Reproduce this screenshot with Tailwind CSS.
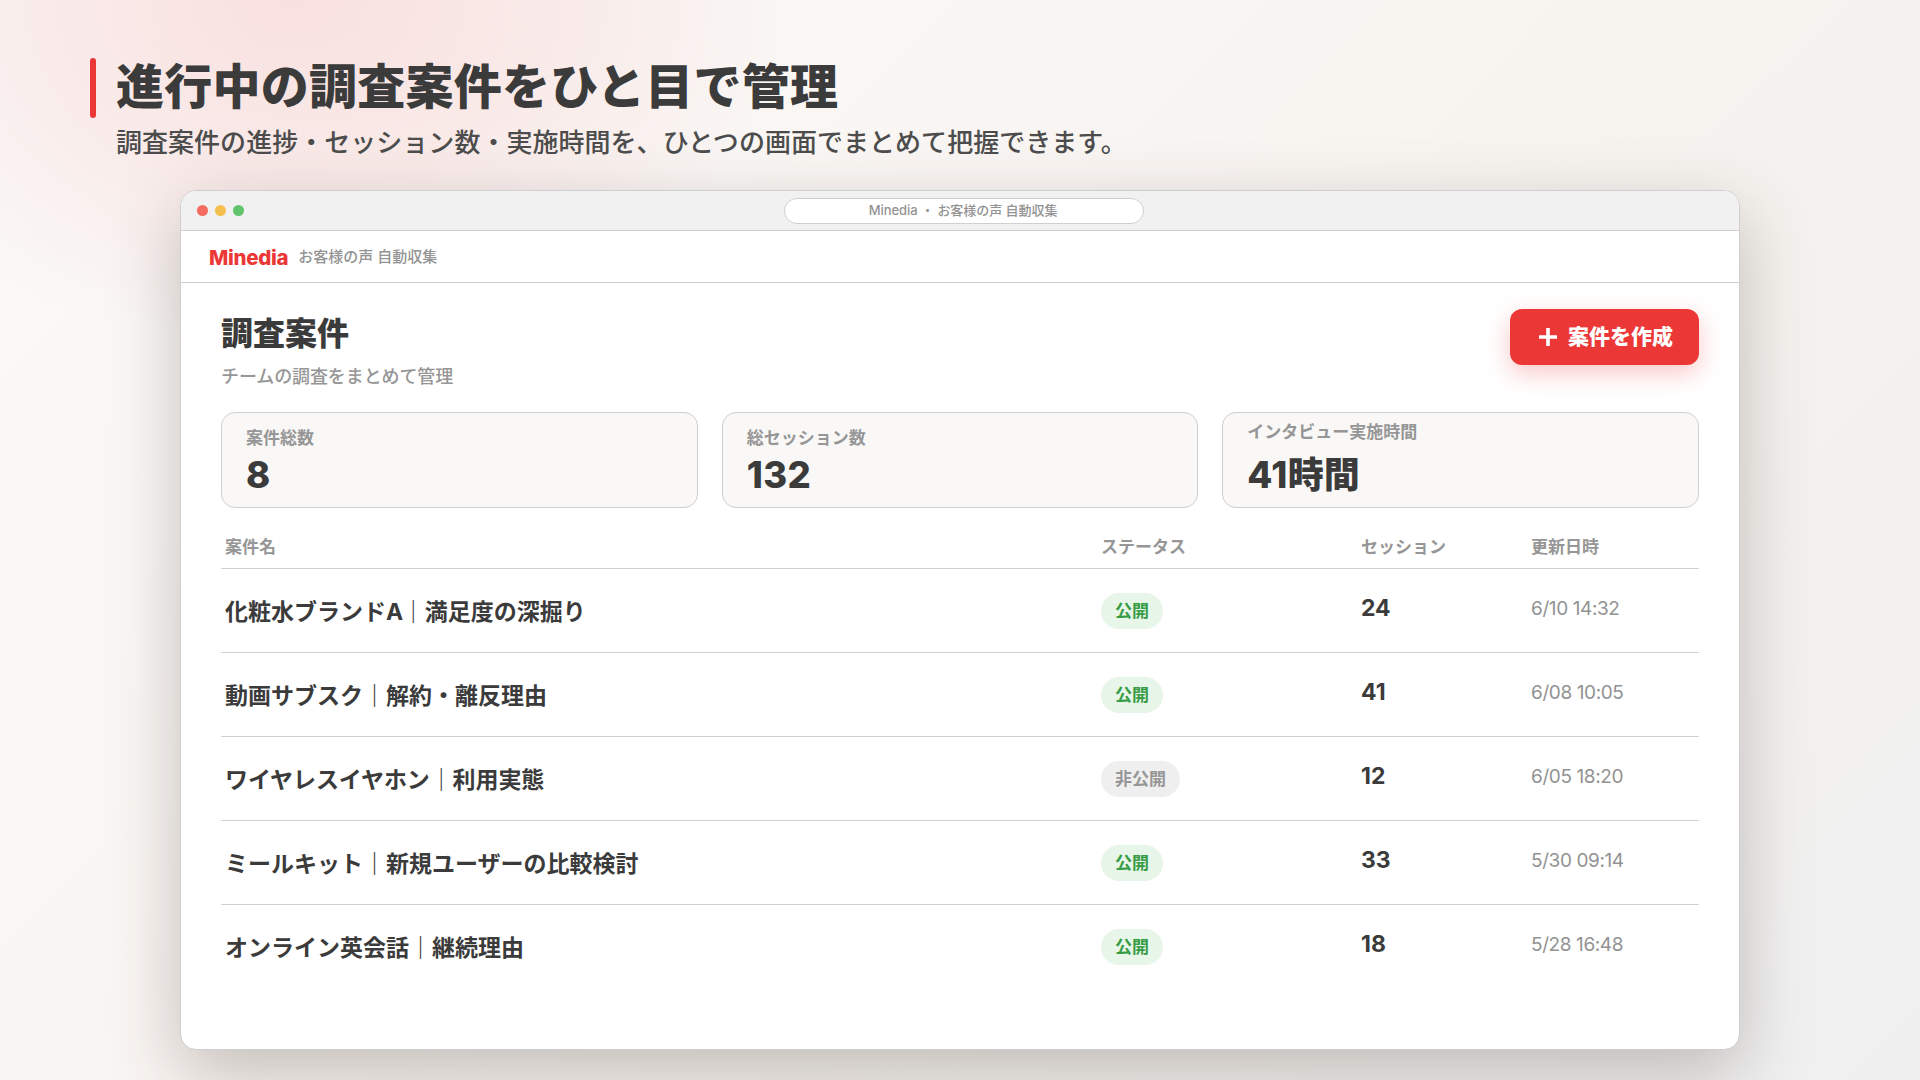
<!DOCTYPE html>
<html lang="ja">
<head>
    <meta charset="UTF-8">
    <meta name="viewport" content="width=device-width, initial-scale=1.0">
    <title>Minedia - お客様の声 自動収集</title>
    <!-- Include Tailwind CSS -->
    <script src="https://cdn.jsdelivr.net/npm/@tailwindcss/browser@4"></script>
</head>
<body class="w-[1920px] h-[1080px] overflow-hidden font-['Inter','Noto_Sans_CJK_JP',sans-serif] text-[#3b3b3b] bg-[radial-gradient(ellipse_500px_350px_at_290px_0px,rgba(240,60,60,0.13),rgba(240,60,60,0.075)_50%,transparent),linear-gradient(135deg,#fafaf9_0%,#f9f5f2_40%,#f4f2ee_68%,#f0f0f1_100%)]">

    <!-- Slide heading -->
    <header class="flex h-[190px] pl-[90px] pt-[58px]">
        <div class="w-[6px] h-[60px] rounded-full bg-[#ec3737]"></div>
        <div class="ml-5">
            <h1 class="text-[48px] leading-[58px] font-black tracking-[0.25px]">進行中の調査案件をひと目で管理</h1>
            <p class="mt-[8px] text-[26px] leading-[38px] font-medium tracking-[0.03px] text-[#4c4c4c]">調査案件の進捗・セッション数・実施時間を、ひとつの画面でまとめて把握できます。</p>
        </div>
    </header>

    <!-- Browser window -->
    <div class="mx-auto w-[1560px] h-[860px] bg-white rounded-2xl border border-[#cfcfcf] overflow-hidden shadow-[0_24px_70px_rgba(60,45,40,0.28)]">
        <!-- Window chrome -->
        <div class="flex items-center h-10 pl-4 bg-[#f1f1f1] border-b border-[#cfcfcf]">
            <div class="flex gap-[7px]">
                <div class="size-[11px] rounded-full bg-[#f56b5f]"></div>
                <div class="size-[11px] rounded-full bg-[#f5bf4f]"></div>
                <div class="size-[11px] rounded-full bg-[#5fc46b]"></div>
            </div>
            <div class="ml-[540px] w-[360px] h-[26px] flex items-center justify-center pb-[2px] pr-[2px] rounded-full bg-white border border-[#cfcfcf] text-[13px] leading-[18px] font-medium tracking-[-0.05px] text-[#939393]">Minedia ・ お客様の声 自動収集</div>
        </div>

        <!-- App header -->
        <div class="flex items-center h-[52px] pl-7 gap-[10px] border-b border-[#cfcfcf]">
            <span class="mt-[2px] text-[20.5px] leading-6 font-extrabold tracking-[-0.3px] text-[#ec3737]">Minedia</span>
            <span class="text-[15px] leading-6 font-medium text-[#939393]">お客様の声 自動収集</span>
        </div>

        <main class="px-10 pt-[26px]">
            <!-- Page title + action -->
            <div class="flex justify-between h-[103px]">
                <div>
                    <h2 class="mt-[5px] text-[32px] leading-[40px] font-black">調査案件</h2>
                    <p class="mt-[11px] text-[18px] leading-6 tracking-[-0.1px] font-medium text-[#969696]">チームの調査をまとめて管理</p>
                </div>
                <button class="flex items-center w-[189px] h-14 pl-[29px] gap-[11px] rounded-xl bg-[#ec3737] text-white text-[21px] leading-6 font-black shadow-[0_8px_24px_rgba(236,55,55,0.28)]">
                    <svg class="size-[18px]" viewBox="0 0 18 18" fill="none" stroke="currentColor" stroke-width="3.6"><path d="M9 0v18M0 9h18"/></svg>
                    <span class="-mt-px">案件を作成</span>
                </button>
            </div>

            <!-- Summary cards -->
            <div class="grid grid-cols-3 gap-6">
                <div class="h-24 px-6 pt-[13px] rounded-[14px] border border-[#cfcfcf] bg-[#f9f8f6]">
                    <div class="text-[17px] leading-6 font-bold text-[#969696]">案件総数</div>
                    <div class="text-[36.5px] leading-[50px] font-extrabold">8</div>
                </div>
                <div class="h-24 px-6 pt-[13px] rounded-[14px] border border-[#cfcfcf] bg-[#f9f8f6]">
                    <div class="text-[17px] leading-6 font-bold text-[#969696]">総セッション数</div>
                    <div class="text-[36.5px] leading-[50px] font-extrabold tracking-[0.4px]">132</div>
                </div>
                <div class="h-24 px-6 pt-[7px] rounded-[14px] border border-[#cfcfcf] bg-[#f9f8f6]">
                    <div class="text-[17px] leading-6 font-bold text-[#969696]">インタビュー実施時間</div>
                    <div class="mt-[6px] text-[36px] leading-[50px] font-black"><span class="text-[36.5px] font-extrabold tracking-[0.4px]">41</span>時間</div>
                </div>
            </div>

            <!-- Project table -->
            <div class="grid grid-cols-[876px_260px_170px_1fr] items-center h-[61px] pl-1 pt-[18px] border-b border-[#cfcfcf] text-[17px] leading-6 font-bold text-[#969696]">
                <span>案件名</span><span>ステータス</span><span>セッション</span><span>更新日時</span>
            </div>
            <div class="grid grid-cols-[876px_260px_170px_1fr] h-[84px] pl-1 pt-6 border-b border-[#cfcfcf]">
                <span class="mt-[3px] text-[23px] leading-8 font-bold">化粧水ブランド<span class="tracking-[-1.5px]">A</span>｜満足度の深掘り</span>
                <span class="w-fit h-9 px-[14px] rounded-full bg-[#e8f6e9] text-[17px] leading-9 font-bold text-[#379c45]">公開</span>
                <span class="text-[23px] leading-[31px] font-bold tracking-[-0.2px]">24</span>
                <span class="text-[19px] leading-[31px] tracking-[-0.4px] text-[#929292]">6/10 14:32</span>
            </div>
            <div class="grid grid-cols-[876px_260px_170px_1fr] h-[84px] pl-1 pt-6 border-b border-[#cfcfcf]">
                <span class="mt-[3px] text-[23px] leading-8 font-bold">動画サブスク｜解約・離反理由</span>
                <span class="w-fit h-9 px-[14px] rounded-full bg-[#e8f6e9] text-[17px] leading-9 font-bold text-[#379c45]">公開</span>
                <span class="text-[23px] leading-[31px] font-bold">41</span>
                <span class="text-[19px] leading-[31px] tracking-[-0.4px] text-[#929292]">6/08 10:05</span>
            </div>
            <div class="grid grid-cols-[876px_260px_170px_1fr] h-[84px] pl-1 pt-6 border-b border-[#cfcfcf]">
                <span class="mt-[3px] text-[23px] leading-8 font-bold tracking-[-0.1px]">ワイヤレスイヤホン｜利用実態</span>
                <span class="w-fit h-9 px-[14px] rounded-full bg-[#efefef] text-[17px] leading-9 font-bold text-[#969696]">非公開</span>
                <span class="text-[23px] leading-[31px] font-bold">12</span>
                <span class="text-[19px] leading-[31px] tracking-[-0.4px] text-[#929292]">6/05 18:20</span>
            </div>
            <div class="grid grid-cols-[876px_260px_170px_1fr] h-[84px] pl-1 pt-6 border-b border-[#cfcfcf]">
                <span class="mt-[3px] text-[23px] leading-8 font-bold">ミールキット｜新規ユーザーの比較検討</span>
                <span class="w-fit h-9 px-[14px] rounded-full bg-[#e8f6e9] text-[17px] leading-9 font-bold text-[#379c45]">公開</span>
                <span class="text-[23px] leading-[31px] font-bold">33</span>
                <span class="text-[19px] leading-[31px] tracking-[-0.4px] text-[#929292]">5/30 09:14</span>
            </div>
            <div class="grid grid-cols-[876px_260px_170px_1fr] h-[84px] pl-1 pt-6">
                <span class="mt-[3px] text-[23px] leading-8 font-bold">オンライン英会話｜継続理由</span>
                <span class="w-fit h-9 px-[14px] rounded-full bg-[#e8f6e9] text-[17px] leading-9 font-bold text-[#379c45]">公開</span>
                <span class="text-[23px] leading-[31px] font-bold">18</span>
                <span class="text-[19px] leading-[31px] tracking-[-0.4px] text-[#929292]">5/28 16:48</span>
            </div>
        </main>
    </div>

</body>
</html>
